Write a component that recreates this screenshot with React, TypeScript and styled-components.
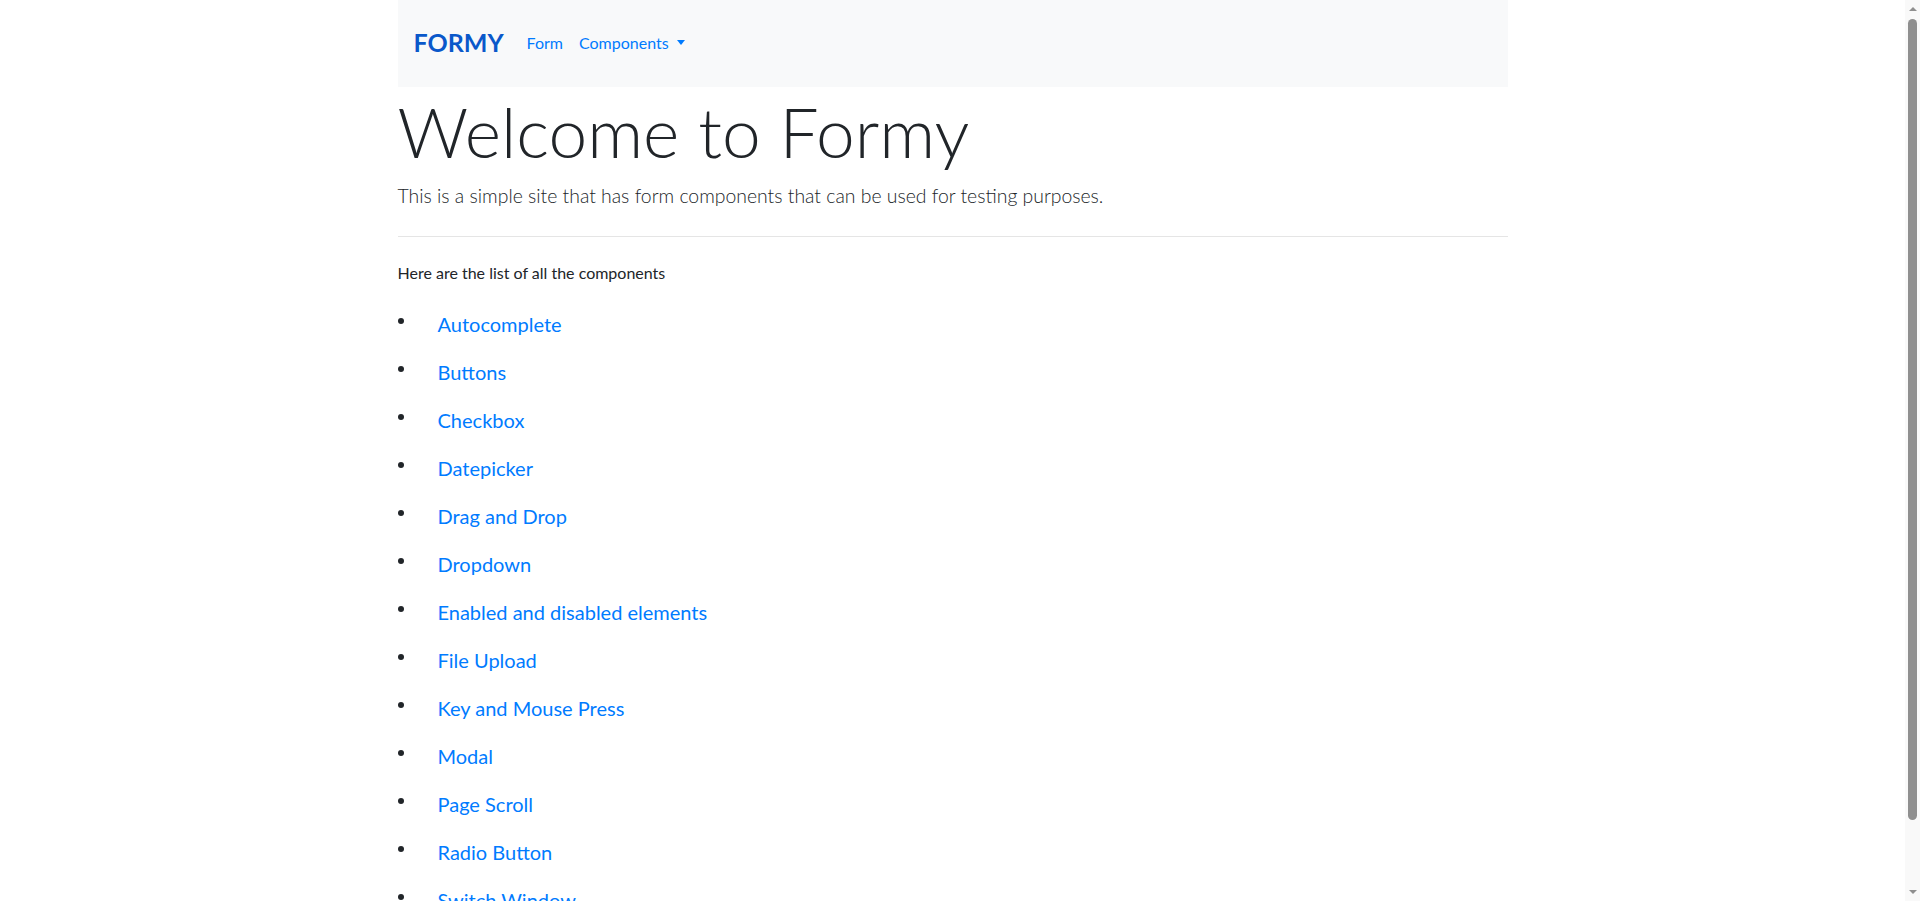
import styled, { createGlobalStyle } from "styled-components";

const components = [
  "Autocomplete",
  "Buttons",
  "Checkbox",
  "Datepicker",
  "Drag and Drop",
  "Dropdown",
  "Enabled and disabled elements",
  "File Upload",
  "Key and Mouse Press",
  "Modal",
  "Page Scroll",
  "Radio Button",
  "Switch Window",
  "Complete Web Form",
];

const GlobalStyle = createGlobalStyle`
  html, body {
    margin: 0;
    padding: 0;
    background: #fff;
  }
  body {
    font-family: Lato, "Open Sans", "Liberation Sans", sans-serif;
    font-size: 16px;
    line-height: 1.5;
    color: #212529;
    padding-right: 15px;
  }
  * {
    box-sizing: border-box;
  }
`;

const App = () => {
  return (
    <>
      <GlobalStyle />
      <Container>
        <Navbar>
          <Brand href="#">FORMY</Brand>
          <NavList>
            <NavLink href="#">Form</NavLink>
            <NavLink href="#">
              Components
              <Caret />
            </NavLink>
          </NavList>
        </Navbar>
        <Heading>Welcome to Formy</Heading>
        <Lead>
          This is a simple site that has form components that can be used for
          testing purposes.
        </Lead>
        <Rule />
        <Intro>Here are the list of all the components</Intro>
        <ComponentList>
          {components.map((name) => (
            <Item key={name}>
              <Bullet />
              <ItemLink href="#">{name}</ItemLink>
            </Item>
          ))}
        </ComponentList>
      </Container>
      <ScrollTrack>
        <Arrow $dir="up" />
        <Thumb />
        <Arrow $dir="down" />
      </ScrollTrack>
    </>
  );
};

const Container = styled.div`
  width: 1140px;
  margin: 0 auto;
  padding: 0 15px;
`;

const Navbar = styled.nav`
  display: flex;
  align-items: center;
  height: 87px;
  padding: 7px 16px 9px;
  background-color: #f8f9fa;
`;

const Brand = styled.a`
  font-size: 25px;
  font-weight: 700;
  color: #0a58ca;
  text-decoration: none;
  margin-right: 15px;
`;

const NavList = styled.div`
  display: flex;
  align-items: center;
`;

const NavLink = styled.a`
  display: flex;
  align-items: center;
  padding: 8px;
  font-size: 16px;
  color: #007bff;
  text-decoration: none;
`;

const Caret = styled.span`
  display: inline-block;
  margin-left: 8px;
  width: 0;
  height: 0;
  border-top: 5px solid #007bff;
  border-left: 4.5px solid transparent;
  border-right: 4.5px solid transparent;
`;

const Heading = styled.h1`
  margin: 3px 0 8px;
  font-size: 69.5px;
  font-weight: 300;
  line-height: 1.2;
`;

const Lead = styled.p`
  margin: 0;
  font-size: 19.4px;
  font-weight: 300;
  color: #212529;
`;

const Rule = styled.hr`
  margin: 25px 0 24px;
  border: 0;
  border-top: 1px solid rgba(0, 0, 0, 0.1);
`;

const Intro = styled.p`
  margin: 0 0 15px;
  font-size: 16px;
`;

const ComponentList = styled.ul`
  list-style: none;
  margin: 0 0 16px;
  padding: 0;
`;

const Item = styled.li`
  display: flex;
  align-items: center;
  height: 48px;
`;

const Bullet = styled.span`
  flex: none;
  width: 6px;
  height: 6px;
  border-radius: 50%;
  background: #212529;
  margin-right: 34px;
  position: relative;
  top: -3px;
`;

const ItemLink = styled.a`
  font-size: 20px;
  color: #007bff;
  text-decoration: none;
`;

const ScrollTrack = styled.div`
  position: fixed;
  top: 0;
  right: 0;
  width: 15px;
  height: 100vh;
  background: #f9f9f9;
  display: flex;
  flex-direction: column;
  align-items: center;
  padding: 5px 0;
`;

const Arrow = styled.span<{ $dir: "up" | "down" }>`
  width: 0;
  height: 0;
  border-left: 4px solid transparent;
  border-right: 4px solid transparent;
  ${(p) =>
    p.$dir === "up"
      ? "border-bottom: 4px solid #8f8f8f;"
      : "border-top: 4px solid #8f8f8f;"}
  margin: 2px 0;
`;

const Thumb = styled.span`
  width: 9px;
  margin: 6px 0 auto;
  height: 801px;
  border-radius: 5px;
  background: #8f8f8f;
`;

export default App;
